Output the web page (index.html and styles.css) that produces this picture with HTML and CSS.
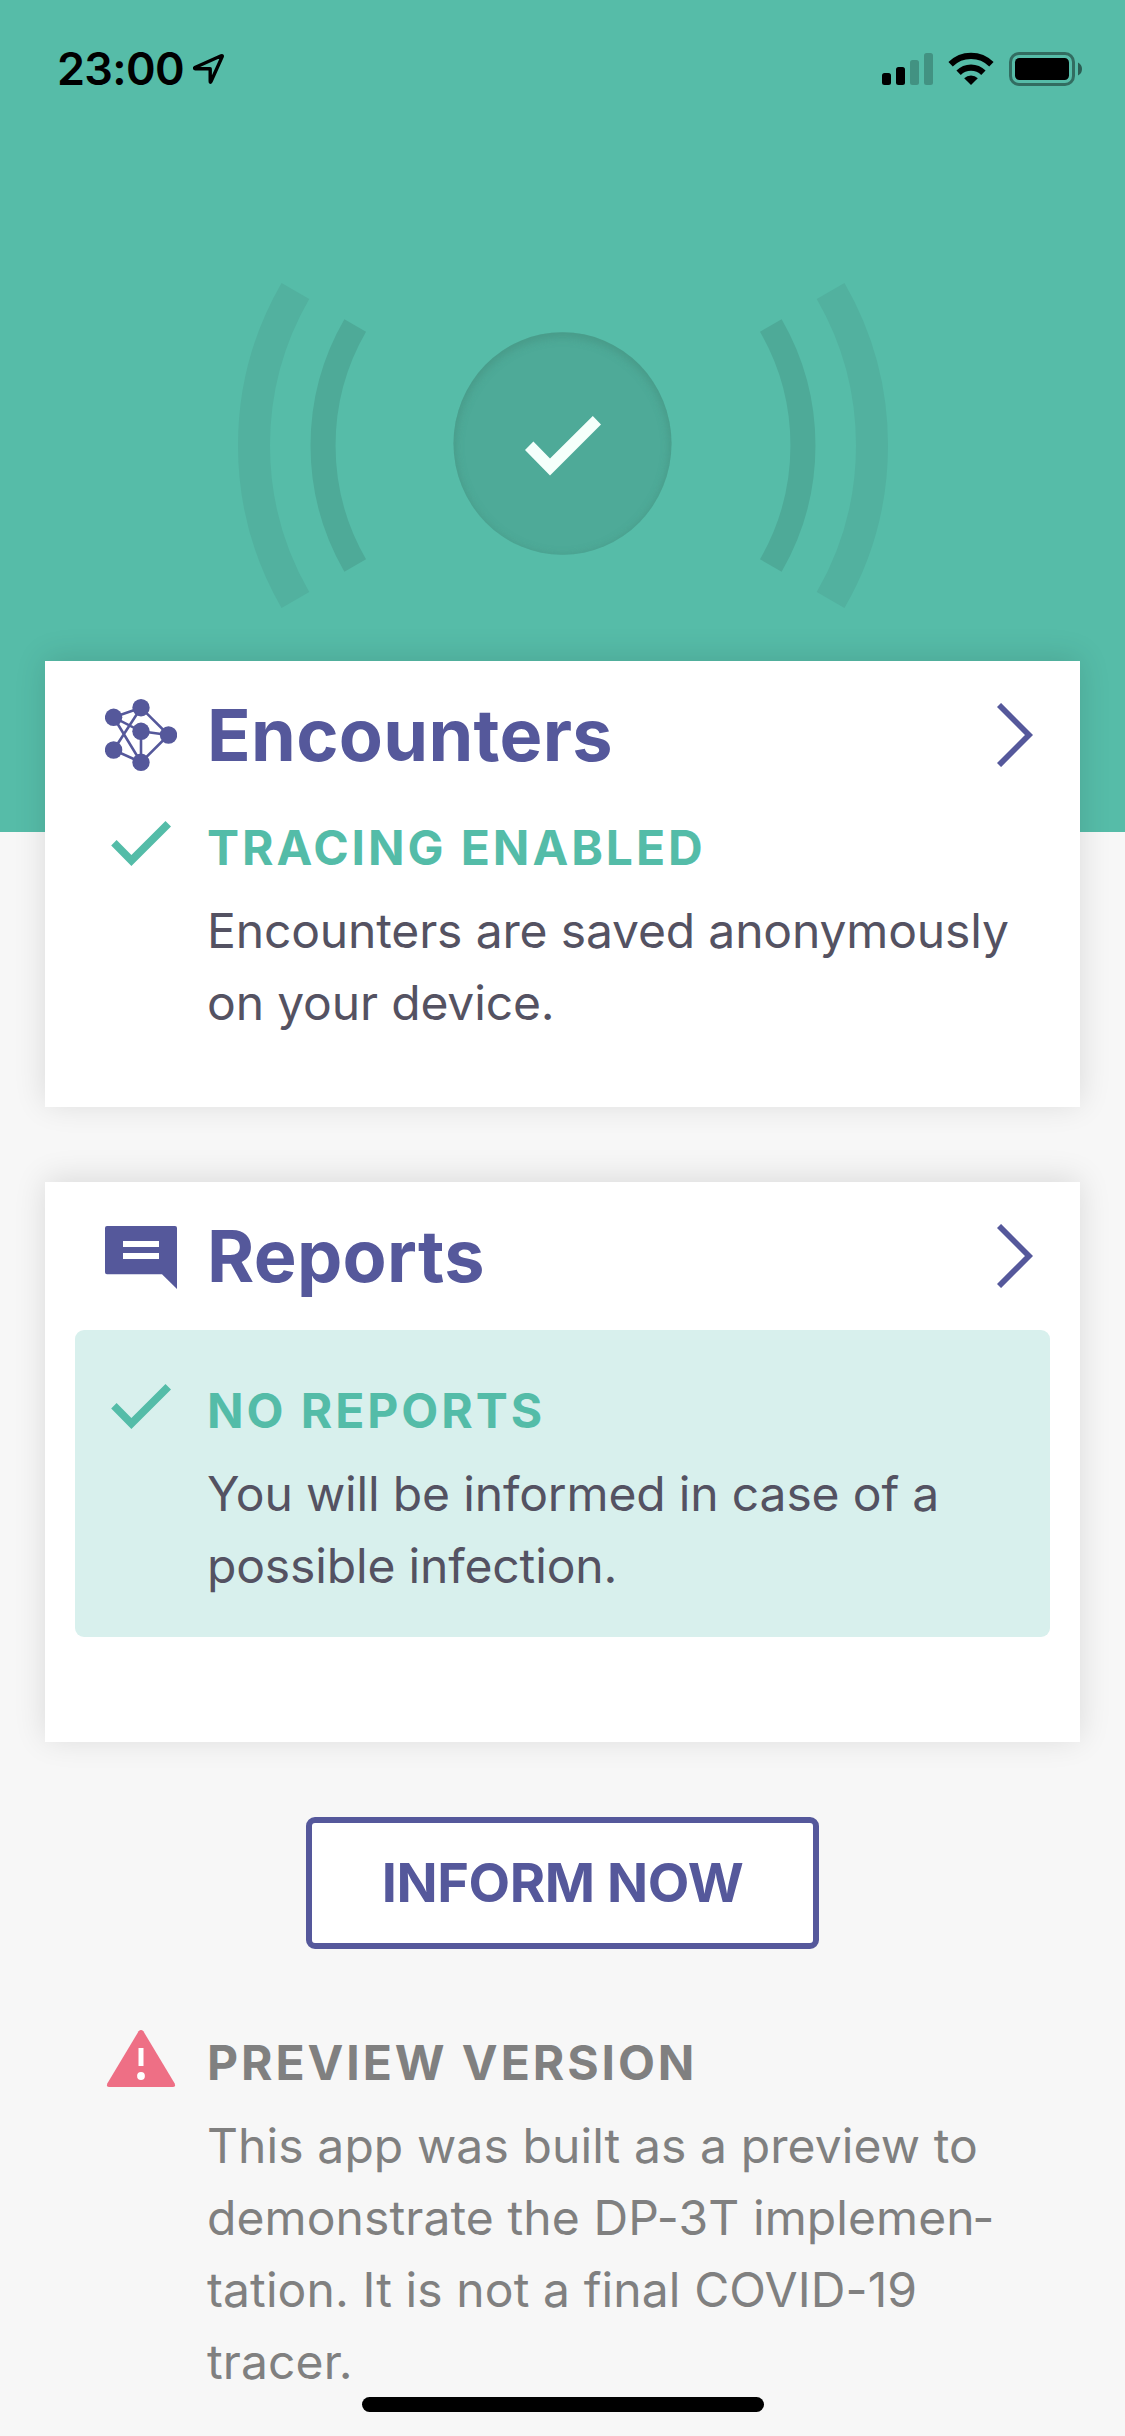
FILE: index.html
```html
<!DOCTYPE html>
<html lang="en">
<head>
<meta charset="utf-8">
<title>Encounters</title>
<link rel="stylesheet" href="styles.css">
</head>
<body>
<header class="hero">
  <div class="statusbar">
    <div class="clock">
      <span class="time">23:00</span>
      <svg class="location" width="32" height="32" viewBox="0 0 32 32"><path d="M2.5 15.2 28.2 3.8Q29.8 3.2 29.1 4.9L18 29.5Q17.2 31 17.2 29.2V16.8H2.6Q.5 16.4 2.5 15.2Z" fill="none" stroke="#000" stroke-width="3.4" stroke-linejoin="round"/></svg>
    </div>
    <div class="indicators">
      <svg width="51" height="34" viewBox="0 0 51 34"><rect y="21" width="9" height="12" rx="2.5"/><rect x="14" y="15" width="9" height="18" rx="2.5"/><g opacity=".22"><rect x="28" y="8" width="9" height="25" rx="2.5"/><rect x="42" y="1" width="9" height="32" rx="2.5"/></g></svg>
      <svg width="46" height="34" viewBox="0 0 46 34"><path d="M23 33 16.2 26.3A9.5 9.5 0 0 1 29.8 26.3Z"/><path d="M10.6 20.7A17.6 17.6 0 0 1 35.4 20.7" fill="none" stroke="#000" stroke-width="6.2"/><path d="M2.6 12.3A29 29 0 0 1 43.4 12.3" fill="none" stroke="#000" stroke-width="6.2"/></svg>
      <svg width="73" height="34" viewBox="0 0 73 34"><rect x="1.5" y="1.5" width="63" height="31" rx="8.5" fill="none" stroke="#000" stroke-opacity=".42" stroke-width="3"/><rect x="6" y="6" width="54" height="22" rx="4.5"/><path d="M69 10.5Q73 12.5 73 17T69 23.5Z" opacity=".5"/></svg>
    </div>
  </div>
  <svg class="beacon" width="650" height="325" viewBox="238 282.5 650 325">
    <defs>
      <clipPath id="disc"><ellipse cx="562.5" cy="443" rx="109" ry="111.3"/></clipPath>
      <filter id="soft" x="-20%" y="-20%" width="140%" height="140%"><feGaussianBlur stdDeviation="5"/></filter>
    </defs>
    <g fill="none">
      <path class="wave-far" d="M295.4 290.5A309 309 0 0 0 295.4 599.5M830.6 290.5A309 309 0 0 1 830.6 599.5"/>
      <path class="wave-near" d="M355.2 325A240 240 0 0 0 355.2 565M770.8 325A240 240 0 0 1 770.8 565"/>
    </g>
    <ellipse class="disc" cx="562.5" cy="443" rx="109" ry="111.3"/>
    <g clip-path="url(#disc)"><ellipse class="disc-shade" cx="562.5" cy="446" rx="113" ry="115" filter="url(#soft)"/></g>
    <path fill="#f5fffb" d="M525 449.5 533.4 441 550 458 592.8 415.5 601 424 550 475Z"/>
  </svg>
</header>

<main class="content">
  <section class="card">
    <div class="card-head">
      <svg width="72" height="72" viewBox="105 699 72 72" fill="#55589b"><path d="M141 707.7 113.6 717.3 141 731.3 168.5 735 141 707.7 113.6 750 141 762.3 113.6 717.3M141 731.3V762.3L168.5 735" fill="none" stroke="#55589b" stroke-width="2.6"/><circle cx="141" cy="707.7" r="8.7"/><circle cx="113.6" cy="717.3" r="8.7"/><circle cx="141" cy="731.3" r="8.7"/><circle cx="168.5" cy="735" r="8.7"/><circle cx="113.6" cy="750" r="8.7"/><circle cx="141" cy="762.3" r="8.7"/></svg>
      <h2>Encounters</h2>
      <svg class="chevron" width="36" height="64" viewBox="0 0 36 64"><path d="M2 2 32 32 2 62" fill="none" stroke="#55589b" stroke-width="5.8"/></svg>
    </div>
    <div class="state">
      <svg width="72" height="72" viewBox="105 812 72 72"><path fill="#54bca8" d="M111.2 845.5 116.6 840 131.4 855 165.5 821 171 826.4 131.4 866Z"/></svg>
      <div>
        <h3>TRACING ENABLED</h3>
        <p>Encounters are saved anonymously on your device.</p>
      </div>
    </div>
  </section>

  <section class="card card-reports">
    <div class="card-head">
      <svg width="72" height="72" viewBox="105 1220 72 72"><path fill="#55589b" d="M107 1226H175Q177 1226 177 1228V1289L162 1274.3H107Q105 1274.3 105 1272.3V1228Q105 1226 107 1226Z"/><path fill="#fff" d="M123 1241H159V1247H123ZM123 1253H159V1259H123Z"/></svg>
      <h2>Reports</h2>
      <svg class="chevron" width="36" height="64" viewBox="0 0 36 64"><path d="M2 2 32 32 2 62" fill="none" stroke="#55589b" stroke-width="5.8"/></svg>
    </div>
    <div class="state panel">
      <svg width="72" height="72" viewBox="105 812 72 72"><path fill="#54bca8" d="M111.2 845.5 116.6 840 131.4 855 165.5 821 171 826.4 131.4 866Z"/></svg>
      <div>
        <h3>NO REPORTS</h3>
        <p>You will be informed in case of a possible infection.</p>
      </div>
    </div>
  </section>

  <button class="inform" type="button">INFORM NOW</button>

  <section class="state notice">
    <svg width="72" height="72" viewBox="105 2027 72 72"><path fill="#ee6f85" d="M138.6 2031.3Q141 2028.5 143.4 2031.3L174.7 2083.5Q176 2087 172.5 2087H109.5Q106 2087 107.3 2083.5Z"/><path d="M141 2048V2066" stroke="#fff" stroke-width="5"/><circle cx="141" cy="2076" r="3.9" fill="#fff"/></svg>
    <div>
      <h3>PREVIEW VERSION</h3>
      <p>This app was built as a preview to demonstrate the DP-3T implemen&shy;tation. It is not a final COVID-19 tracer.</p>
    </div>
  </section>
</main>
<div class="home-indicator"></div>
</body>
</html>
```
FILE: styles.css
```css
* { box-sizing: border-box; }

body {
  margin: 0;
  height: 2436px;
  overflow: hidden;
  position: relative;
  background: #f7f7f7;
  font-family: Inter, "Liberation Sans", sans-serif;
}

h2, h3, p { margin: 0; }
svg { display: block; flex: none; }

.hero {
  height: 832px;
  background: #56bca8;
}

.statusbar {
  height: 132px;
  padding: 40px 43px 0 57px;
  display: flex;
  justify-content: space-between;
  align-items: flex-start;
}

.clock {
  display: flex;
  align-items: center;
  gap: 9px;
  height: 58px;
}

.time {
  font-size: 45px;
  line-height: 56px;
  font-weight: 600;
  letter-spacing: -.7px;
}

.indicators {
  display: flex;
  gap: 15px;
  padding-top: 12px;
}

.location { margin-top: -2px; }

.beacon { margin: 150.5px 0 0 238px; }
.wave-far { stroke: #52b19f; stroke-width: 32; }
.wave-near { stroke: #4eaa98; stroke-width: 25; }
.disc { fill: #4eaa98; }
.disc-shade { fill: none; stroke: #45917f; stroke-width: 10; opacity: .7; }

.content {
  margin-top: -171px;
  padding: 0 45px;
  display: flex;
  flex-direction: column;
  align-items: center;
}

.card {
  width: 100%;
  height: 446px;
  padding: 32px 30px 0;
  background: #fff;
  box-shadow: 0 -3px 30px rgba(0, 0, 0, .12);
}

.card-reports {
  margin-top: 75px;
  height: 560px;
}

.card-head {
  display: flex;
  align-items: center;
  gap: 30px;
  height: 84px;
  padding: 0 17px 0 30px;
}

h2 {
  flex: 1;
  color: #55589b;
  font-size: 72px;
  line-height: 84px;
  font-weight: 700;
  letter-spacing: .3px;
}

.state {
  display: grid;
  grid-template-columns: 72px 1fr;
  column-gap: 30px;
  padding: 0 0 0 30px;
  margin-top: 35px;
}

.panel {
  margin-top: 32px;
  height: 307px;
  padding-top: 45px;
  border-radius: 9px;
  background: #d8f0ed;
}

h3 {
  color: #54bca8;
  font-size: 48px;
  line-height: 72px;
  font-weight: 700;
  letter-spacing: 2.93px;
}

p {
  margin-top: 11px;
  color: #545262;
  font-size: 48px;
  line-height: 72px;
  font-weight: 400;
  letter-spacing: -.15px;
}

.inform {
  width: 513px;
  height: 132px;
  margin-top: 75px;
  padding: 0;
  border: 6px solid #55589b;
  border-radius: 9px;
  background: #fff;
  color: #55589b;
  font: 700 54px/72px Inter, "Liberation Sans", sans-serif;
  letter-spacing: -.4px;
}

.notice {
  width: 100%;
  margin-top: 78px;
  padding: 0 30px 0 60px;
}

.notice h3, .notice p { color: #808080; }
.notice p { letter-spacing: .1px; }

.home-indicator {
  position: absolute;
  left: 362px;
  bottom: 24px;
  width: 402px;
  height: 15px;
  border-radius: 8px;
  background: #000;
}
```
